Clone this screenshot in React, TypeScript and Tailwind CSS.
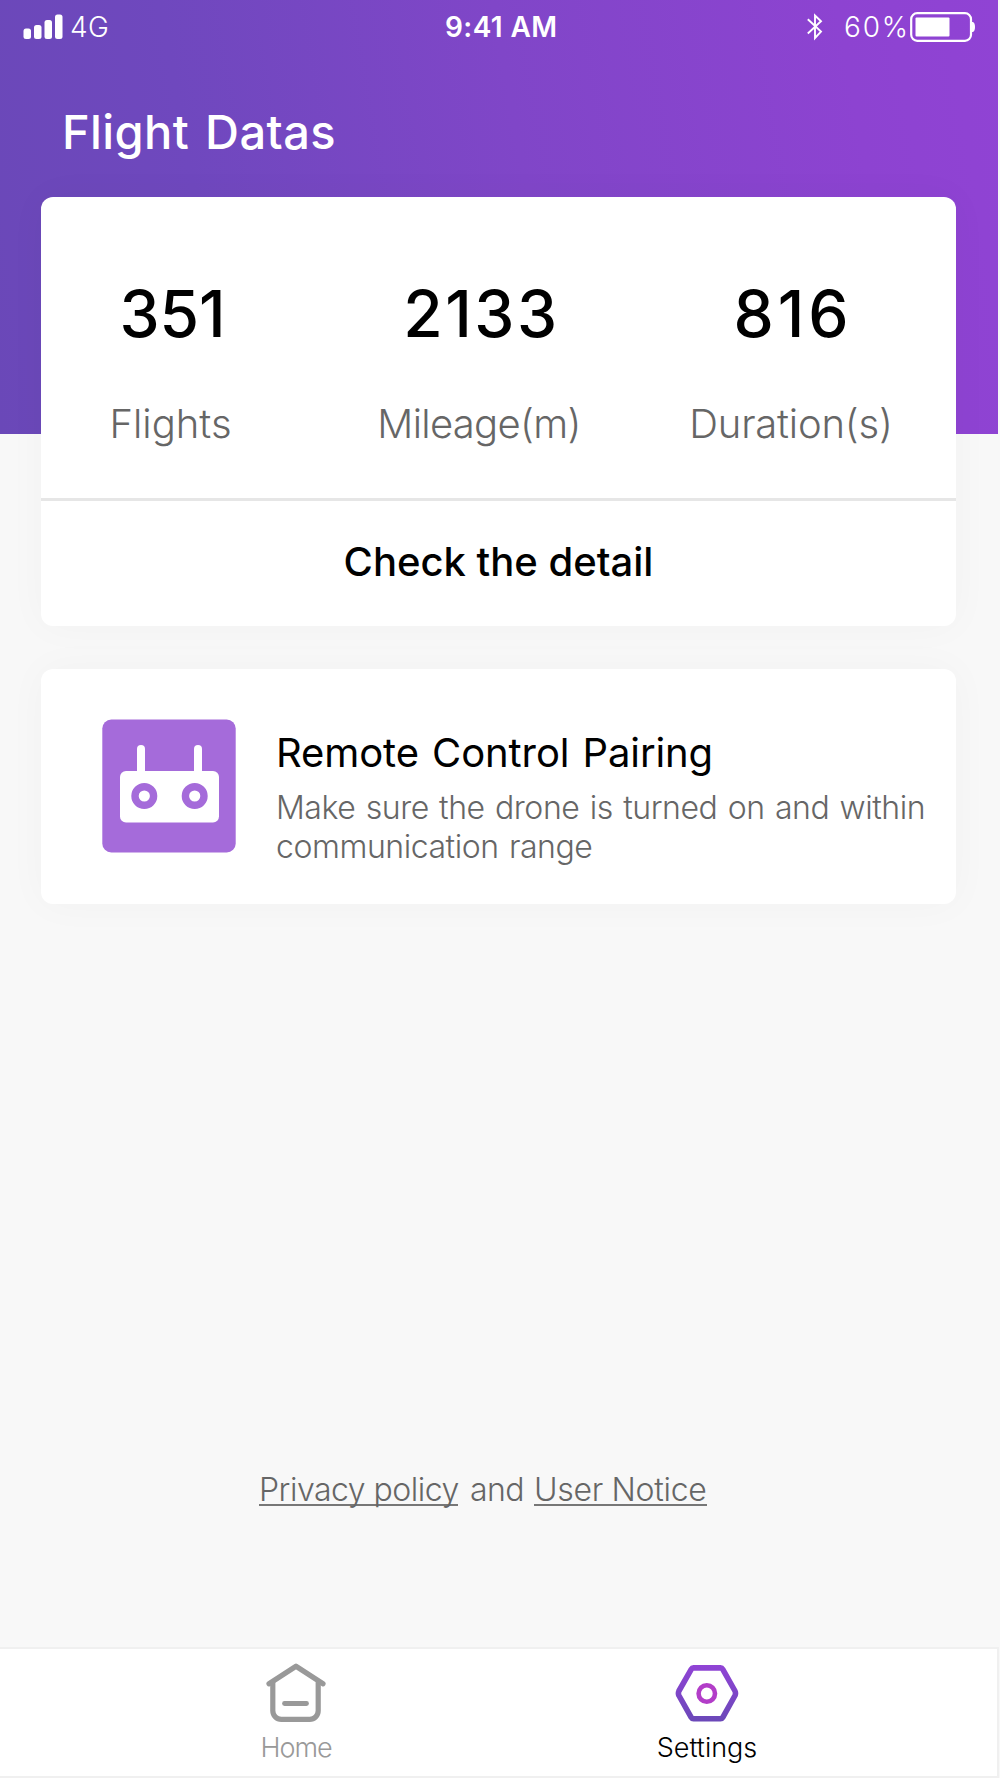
const stats = [
  { id: 'flights', value: '351', label: 'Flights', className: 'w-[259px]', valueClass: 'pl-[4px]', labelClass: '' },
  { id: 'mileage', value: '2133', label: 'Mileage(m)', className: 'w-[358px]', valueClass: 'pl-[5px] tracking-[2.6px]', labelClass: 'tracking-[-0.7px]' },
  { id: 'duration', value: '816', label: 'Duration(s)', className: 'w-[266px]', valueClass: 'pl-[4px] tracking-[4px]', labelClass: 'tracking-[-0.2px]' },
];

const SignalIcon = () => (
  <svg width="40" height="26" viewBox="0 0 40 26" fill="#fff">
    <rect x="0.5" y="14.5" width="7.5" height="10.5" rx="2.5" />
    <rect x="11" y="11" width="7.5" height="14" rx="2.5" />
    <rect x="21.5" y="6" width="7.5" height="19" rx="2.5" />
    <rect x="32" y="0.5" width="7.5" height="24.5" rx="2.5" />
  </svg>
);

const BluetoothIcon = () => (
  <svg width="16" height="28" viewBox="0 0 16 28" fill="none" stroke="#fff" strokeWidth="1.9">
    <path d="M0.8 6.3 L14 18.6 L8 25 V2.5 L14 8.3 L0.8 20.5" />
  </svg>
);

const BatteryIcon = () => (
  <svg width="66" height="30" viewBox="0 0 66 30" fill="none">
    <rect x="1.2" y="1.2" width="59.8" height="27.6" rx="6" stroke="#fff" strokeWidth="2.2" />
    <rect x="5.5" y="5.5" width="34" height="19" rx="1" fill="#fff" />
    <path d="M62 10 H63 Q65 11 65 15 Q65 19 63 20 H62 Z" fill="#fff" />
  </svg>
);

const RemoteIcon = () => (
  <svg width="134" height="134" viewBox="0 0 134 134">
    <rect x="0.3" y="0.5" width="133.4" height="133" rx="9" fill="#a56bda" />
    <rect x="35" y="26" width="8" height="32" rx="4" fill="#fff" />
    <rect x="92" y="26" width="8" height="32" rx="4" fill="#fff" />
    <rect x="18" y="52" width="99" height="51.5" rx="6" fill="#fff" />
    <circle cx="42.3" cy="77" r="9.3" stroke="#a56bda" strokeWidth="7.4" fill="none" />
    <circle cx="92.7" cy="77" r="9.3" stroke="#a56bda" strokeWidth="7.4" fill="none" />
  </svg>
);

const HomeIcon = () => (
  <svg width="60" height="60" viewBox="0 0 60 60" fill="none" stroke="#999" strokeWidth="5.2" strokeLinecap="round" strokeLinejoin="round">
    <path d="M3 21.8 L30 4.2 L57 21.8" />
    <path d="M6.8 21 V48.8 A8.5 8.5 0 0 0 15.3 57.3 H43.7 A8.5 8.5 0 0 0 52.2 48.8 V21" />
    <path d="M18.5 41.5 H40.5" strokeWidth="4.8" />
  </svg>
);

const SettingsIcon = () => (
  <svg width="64" height="58" viewBox="0 0 64 58" fill="none">
    <defs>
      <linearGradient id="hexagon" x1="0" y1="0" x2="0" y2="58" gradientUnits="userSpaceOnUse">
        <stop offset="0" stopColor="#9143d6" />
        <stop offset="1" stopColor="#6a48b8" />
      </linearGradient>
    </defs>
    <path
      d="M18.5 3.9 H45.5 Q47 3.9 47.8 5.3 L60 27 Q61 29.3 60 31.5 L47.8 53.4 Q47 54.8 45.5 54.8 H18.5 Q17 54.8 16.2 53.4 L3.9 31.5 Q2.9 29.3 3.9 27 L16.2 5.3 Q17 3.9 18.5 3.9 Z"
      stroke="url(#hexagon)"
      strokeWidth="5.6"
      strokeLinejoin="round"
    />
    <circle cx="31.8" cy="29.5" r="8.2" stroke="#b23dc8" strokeWidth="4.6" />
  </svg>
);

const StatusBar = () => (
  <div className="flex h-[54px] items-center text-[28px] leading-[54px]">
    <div className="flex w-[445px] items-center pl-[23px]">
      <SignalIcon />
      <span className="ml-[7px] font-light tracking-[0.5px]">4G</span>
    </div>
    <span className="w-[362px] font-semibold tracking-[0.4px]">9:41 AM</span>
    <BluetoothIcon />
    <span className="ml-[21px] w-[66px] whitespace-nowrap font-light tracking-[1.8px]">60%</span>
    <BatteryIcon />
  </div>
);

const App = () => {
  return (
    <div className="flex h-[1778px] w-[1000px] flex-col overflow-hidden bg-[#f8f8f8] font-['Inter',sans-serif]">
      <header className="h-[434px] w-[998px] shrink-0 bg-[linear-gradient(80deg,#6a48b8_0%,#6f48be_22%,#8046c8_53%,#8d43d1_85%,#9043d4_100%)] text-white">
        <StatusBar />
        <h1 className="pl-[62px] pt-[50px] text-[47px] font-medium leading-[56px] tracking-[0.4px] [word-spacing:3px]">Flight Datas</h1>
      </header>

      <main className="-mt-[237px] flex grow flex-col pl-[41px]">
        <section className="h-[429px] w-[915px] rounded-xl bg-white shadow-[0_0_40px_rgba(0,0,0,0.03)]">
          <div className="flex h-[301px] pt-[78px] text-center">
            {stats.map(stat => (
              <div key={stat.id} className={stat.className}>
                <p className={`text-[64px] font-medium leading-[78px] text-black ${stat.valueClass}`}>{stat.value}</p>
                <p className={`mt-[46px] text-[40px] font-light leading-[50px] text-[#666] ${stat.labelClass}`}>{stat.label}</p>
              </div>
            ))}
          </div>
          <button className="block h-[128px] w-full border-t-[3px] border-[#e6e6e6] pb-[3px] text-[40px] font-medium text-black">
            Check the detail
          </button>
        </section>

        <section className="mt-[43px] flex h-[235px] w-[915px] rounded-xl bg-white pl-[61px] pt-[50px] shadow-[0_0_40px_rgba(0,0,0,0.03)]">
          <RemoteIcon />
          <div className="pl-[40px] pt-[9px]">
            <h2 className="text-[40px] leading-[50px] tracking-[-0.1px] text-black [word-spacing:2px]">Remote Control Pairing</h2>
            <p className="mt-[10px] whitespace-nowrap text-[32px] font-light leading-[39px] tracking-[-0.45px] text-[#666] [word-spacing:1.8px]">
              Make sure the drone is turned on and within
              <br />
              communication range
            </p>
          </div>
        </section>

        <p className="mt-auto mb-[141px] flex whitespace-nowrap pl-[218px] text-[32px] font-light leading-[29px] text-[#666]">
          <a className="w-[199px] border-b-2 border-[#777] tracking-[-0.5px]">Privacy policy</a>
          <span className="w-[76px] pl-[12px] tracking-[-0.6px]">and</span>
          <a className="w-[173px] border-b-2 border-[#777] tracking-[-0.3px]">User Notice</a>
        </p>
      </main>

      <nav className="flex h-[131px] w-[999px] shrink-0 border-y-2 border-r-2 border-[#f0f0f0] bg-white text-[27px] font-light leading-[34px]">
        <a className="ml-[246px] flex w-[100px] flex-col items-center pt-[13px] text-[#999]">
          <HomeIcon />
          <span className="mt-[9px] tracking-[-1px]">Home</span>
        </a>
        <a className="ml-[301px] flex w-[120px] flex-col items-center pt-[15px] text-black">
          <SettingsIcon />
          <span className="mt-[9px]">Settings</span>
        </a>
      </nav>
    </div>
  );
};

export default App;
